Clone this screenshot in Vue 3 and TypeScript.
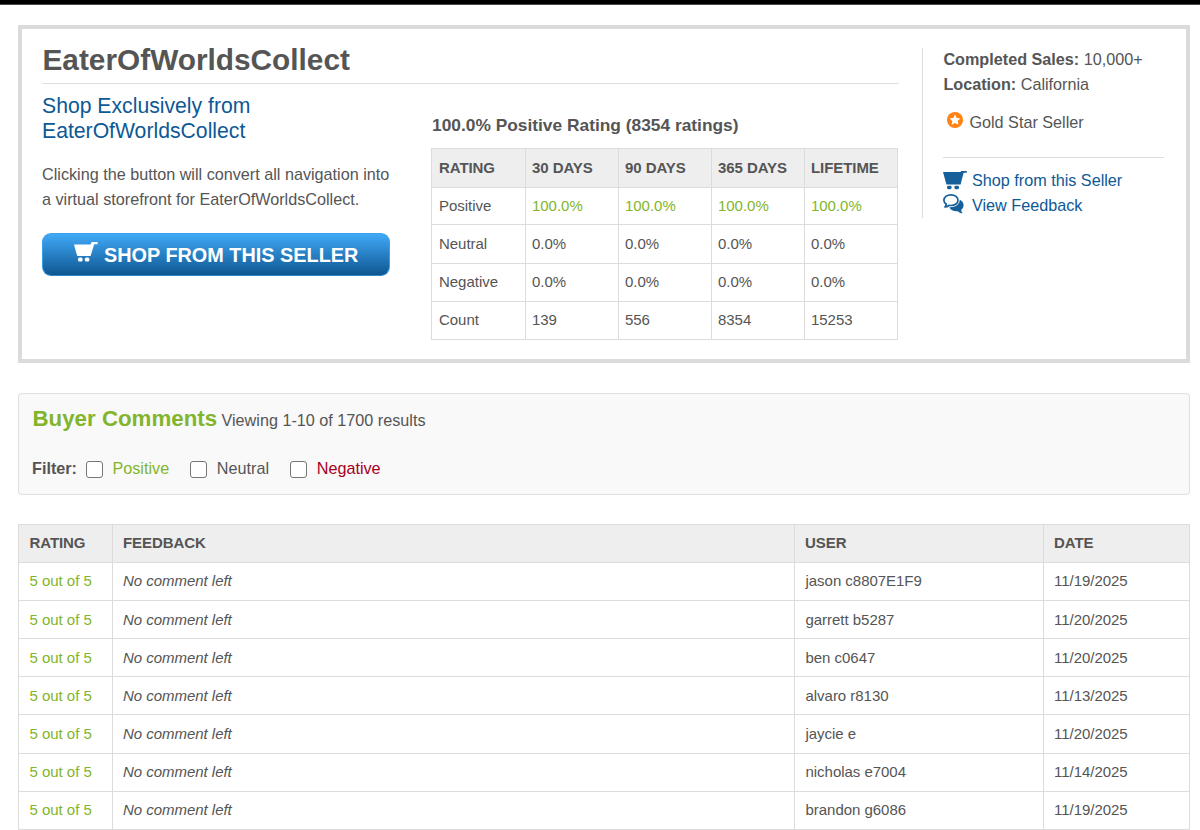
<script setup lang="ts">
interface RatingRow {
  label: string
  values: string[]
  positive?: boolean
}

interface Comment {
  user: string
  date: string
}

const periods: string[] = ['30 DAYS', '90 DAYS', '365 DAYS', 'LIFETIME']

const ratings: RatingRow[] = [
  { label: 'Positive', values: ['100.0%', '100.0%', '100.0%', '100.0%'], positive: true },
  { label: 'Neutral', values: ['0.0%', '0.0%', '0.0%', '0.0%'] },
  { label: 'Negative', values: ['0.0%', '0.0%', '0.0%', '0.0%'] },
  { label: 'Count', values: ['139', '556', '8354', '15253'] },
]

const comments: Comment[] = [
  { user: 'jason c8807E1F9', date: '11/19/2025' },
  { user: 'garrett b5287', date: '11/20/2025' },
  { user: 'ben c0647', date: '11/20/2025' },
  { user: 'alvaro r8130', date: '11/13/2025' },
  { user: 'jaycie e', date: '11/20/2025' },
  { user: 'nicholas e7004', date: '11/14/2025' },
  { user: 'brandon g6086', date: '11/19/2025' },
]
</script>

<template>
  <div class="page">
    <div class="topbar"></div>
    <section class="seller">
      <div class="main">
        <h1>EaterOfWorldsCollect</h1>
        <div class="columns">
          <div class="promo">
            <h2>Shop Exclusively from<br />EaterOfWorldsCollect</h2>
            <p>Clicking the button will convert all navigation into<br />a virtual storefront for EaterOfWorldsCollect.</p>
            <button class="shop" type="button">
              <svg class="cart" viewBox="0 0 24 20" fill="currentColor">
                <path d="M0 2.4H16.6L17.6 0H23.6V2.2H20.2L16.6 14H3.4L2.6 12Z" />
                <rect x="4" y="15.6" width="4.6" height="3.8" rx="1.5" />
                <rect x="10.8" y="15.6" width="4.6" height="3.8" rx="1.5" />
              </svg>
              <span>SHOP FROM THIS SELLER</span>
            </button>
          </div>
          <div class="stats">
            <h3>100.0% Positive Rating (8354 ratings)</h3>
            <table class="grid rating">
              <colgroup>
                <col class="first" />
                <col v-for="p in periods" :key="p" class="period" />
              </colgroup>
              <thead>
                <tr>
                  <th>RATING</th>
                  <th v-for="p in periods" :key="p">{{ p }}</th>
                </tr>
              </thead>
              <tbody>
                <tr v-for="row in ratings" :key="row.label">
                  <td>{{ row.label }}</td>
                  <td v-for="(value, i) in row.values" :key="i" :class="{ green: row.positive }">{{ value }}</td>
                </tr>
              </tbody>
            </table>
          </div>
        </div>
      </div>
      <aside>
        <div class="fact"><b>Completed Sales:</b> 10,000+</div>
        <div class="fact"><b>Location:</b> California</div>
        <div class="gold">
          <svg viewBox="0 0 16 16">
            <circle cx="8" cy="8" r="8" fill="#ff8212" />
            <path fill="#fff" d="M8 2.5L9.7 5.9L13.4 6.4L10.7 9L11.4 12.8L8 11L4.6 12.8L5.3 9L2.6 6.4L6.3 5.9Z" />
          </svg>
          <span>Gold Star Seller</span>
        </div>
        <a class="link">
          <svg class="cart-link" viewBox="0 0 24 20" fill="currentColor">
            <path d="M0 1H17.4L18.2 0H23.8V1.7H20.6L17.6 13.6H3.6L3 12Z" />
            <rect x="4" y="14.8" width="4.6" height="3.4" rx="1.4" />
            <rect x="11.4" y="14.8" width="4.6" height="3.4" rx="1.4" />
          </svg>
          <span>Shop from this Seller</span>
        </a>
        <a class="link">
          <svg class="chat" viewBox="0 0 21 20">
            <path fill="currentColor" d="M16.8 5.8C19.2 6.9 20.7 9 20.6 11.4C20.5 13.2 19.6 14.6 18.2 15.7C18.2 17 18.7 18.2 19.6 19.3C17.6 19.2 16 18.4 14.8 17.2C10.9 17.6 7.6 16.2 6.3 13.2C12 13.6 16.8 10.6 16.8 5.8Z" />
            <path fill="none" stroke="currentColor" stroke-width="1.7" stroke-linejoin="round" d="M7.9 .9C12 .9 15 3.2 15 6.2C15 9.2 12 11.5 7.9 11.5C7.2 11.500 6.600 11.400 6 11.300C5 12.300 3.600 12.900 1.900 13C2.800 12 3.200 11 3.200 10C1.700 9.100 .9 7.700 .9 6.200C.9 3.200 3.900 .9 7.900 .9Z" />
          </svg>
          <span>View Feedback</span>
        </a>
      </aside>
    </section>

    <section class="panel">
      <div class="heading"><h2>Buyer Comments</h2><span>Viewing 1-10 of 1700 results</span></div>
      <div class="filters">
        <b>Filter:</b>
        <label class="green"><input type="checkbox" />Positive</label>
        <label><input type="checkbox" />Neutral</label>
        <label class="red"><input type="checkbox" />Negative</label>
      </div>
    </section>

    <table class="grid feedback">
      <colgroup>
        <col class="c-rating" />
        <col class="c-comment" />
        <col class="c-user" />
        <col class="c-date" />
      </colgroup>
      <thead>
        <tr>
          <th>RATING</th>
          <th>FEEDBACK</th>
          <th>USER</th>
          <th>DATE</th>
        </tr>
      </thead>
      <tbody>
        <tr v-for="c in comments" :key="c.user">
          <td class="green">5 out of 5</td>
          <td><em>No comment left</em></td>
          <td>{{ c.user }}</td>
          <td>{{ c.date }}</td>
        </tr>
      </tbody>
    </table>
  </div>
</template>

<style>
html,
body {
  margin: 0;
  overflow: hidden;
  background: #fff;
}
</style>

<style scoped>
.page {
  width: 1200px;
  height: 830px;
  overflow: hidden;
  box-sizing: border-box;
  font-family: "Liberation Sans", Arial, sans-serif;
  font-size: 16.2px;
  line-height: 25px;
  color: #555;
}
.page *,
.page *::before {
  box-sizing: border-box;
}
h1,
h2,
h3,
p {
  margin: 0;
}
.green {
  color: #82b52c;
}
.red {
  color: #a5001f;
}
.topbar {
  height: 5px;
  background: #000;
  border-bottom: 1px solid #4a4a4a;
}
.seller {
  display: flex;
  width: 1172px;
  height: 338px;
  margin: 20px 0 0 18px;
  border: 4px solid #dbdbdb;
  padding: 19px 20px 0;
}
.main {
  width: 857px;
}
h1 {
  height: 36px;
  padding-left: 0.5px;
  border-bottom: 1px solid #dfdfdf;
  font-size: 29.8px;
  line-height: 24px;
  font-weight: bold;
}
.columns {
  display: flex;
}
.promo {
  width: 389px;
  padding-top: 9px;
}
.promo h2 {
  font-size: 21.2px;
  line-height: 25px;
  font-weight: normal;
  color: #0d5995;
}
.promo p {
  margin-top: 19px;
  white-space: nowrap;
}
.shop {
  display: flex;
  align-items: center;
  width: 348px;
  height: 43px;
  margin-top: 21px;
  padding: 0 0 0 31px;
  border: 1px solid #3aa0ea;
  border-bottom-color: #2d86c6;
  border-radius: 9px;
  background: linear-gradient(#41a9f7, #0e5791);
  color: #fff;
  font: bold 19.85px/24px "Liberation Sans", Arial, sans-serif;
  white-space: nowrap;
}
.cart {
  width: 24px;
  height: 20px;
  margin: -6px 6px 0 0;
}
.stats {
  padding-top: 29px;
}
h3 {
  padding-left: 1px;
  font-size: 17.35px;
  line-height: 25px;
  margin-bottom: 10px;
}
.grid {
  table-layout: fixed;
  border-collapse: separate;
  border-spacing: 0;
  border: solid #dcdcdc;
  border-width: 1px 0 0 1px;
  font-size: 15px;
  letter-spacing: -0.03px;
  line-height: 20px;
}
.grid th,
.grid td {
  padding: 0 0 1px 7px;
  border: solid #dcdcdc;
  border-width: 0 1px 1px 0;
  text-align: left;
  vertical-align: middle;
  white-space: nowrap;
}
.grid th {
  background: #eee;
  font-weight: bold;
  letter-spacing: -0.07px;
}
.grid tr {
  height: 38px;
}
.rating {
  width: 467px;
}
.rating td + td,
.rating th + th {
  padding-left: 6px;
}
.rating .first {
  width: 94px;
}
.rating .period {
  width: 93px;
}
.rating thead tr {
  height: 39px;
}
.rating tbody tr:nth-child(1) {
  height: 37px;
}
.rating tbody tr:nth-child(2) {
  height: 39px;
}
aside {
  width: 243px;
  height: 170px;
  margin-left: 23px;
  padding-left: 20px;
  border-left: 1px solid #dcdcdc;
}
.fact:first-child {
  margin-top: -1px;
}
.fact {
  padding-left: 0.4px;
}
.gold {
  display: flex;
  align-items: center;
  width: 221px;
  height: 61px;
  padding: 0 0 10px 4px;
  border-bottom: 1px solid #dcdcdc;
  margin-bottom: 10px;
}
.gold svg {
  width: 16px;
  height: 16px;
  margin: -4px 6.4px 0 0;
}
.link {
  display: flex;
  height: 25px;
  color: #0d5995;
}
.link svg {
  color: #155f9a;
}
.link span {
  margin-left: 5px;
}
.cart-link {
  width: 24px;
  height: 20px;
  margin-top: 3px;
}
.chat {
  width: 21px;
  height: 20px;
  margin: 1px 3px 0 0;
}
.panel {
  width: 1172px;
  height: 102px;
  margin: 30px 0 0 18px;
  padding: 13px;
  border: 1px solid #dfdfdf;
  border-radius: 4px;
  background: #f9f9f9;
}
.heading {
  display: flex;
  align-items: baseline;
  height: 49px;
  margin-top: -1px;
  margin-bottom: 1px;
  padding-left: 0.5px;
}
.heading h2 {
  font-size: 22.3px;
  line-height: 25px;
  margin-right: 4.4px;
  color: #82b52c;
}
.filters {
  display: flex;
}
.filters label {
  display: flex;
  align-items: center;
}
.filters input {
  appearance: none;
  width: 17px;
  height: 17px;
  margin: 1px 9.5px 0 9px;
  border: 1px solid #767676;
  border-radius: 3px;
  background: #fff;
}
.filters label + label {
  margin-left: 12.2px;
}
.feedback {
  width: 1172px;
  margin: 29px 0 0 18px;
}
.feedback .c-rating {
  width: 94px;
}
.feedback .c-comment {
  width: 682px;
}
.feedback .c-user {
  width: 249px;
}
.feedback .c-date {
  width: 146px;
}
.feedback th,
.feedback td {
  padding-left: 10px;
}
.feedback th:first-child,
.feedback td:first-child,
.feedback td:nth-child(3) {
  padding-left: 10.5px;
}
.feedback tbody tr:nth-child(2) td,
.feedback tbody tr:nth-child(3) td,
.feedback tbody tr:nth-child(4) td {
  padding-bottom: 0;
}
.feedback tbody tr:nth-child(5) {
  height: 39px;
}
</style>
